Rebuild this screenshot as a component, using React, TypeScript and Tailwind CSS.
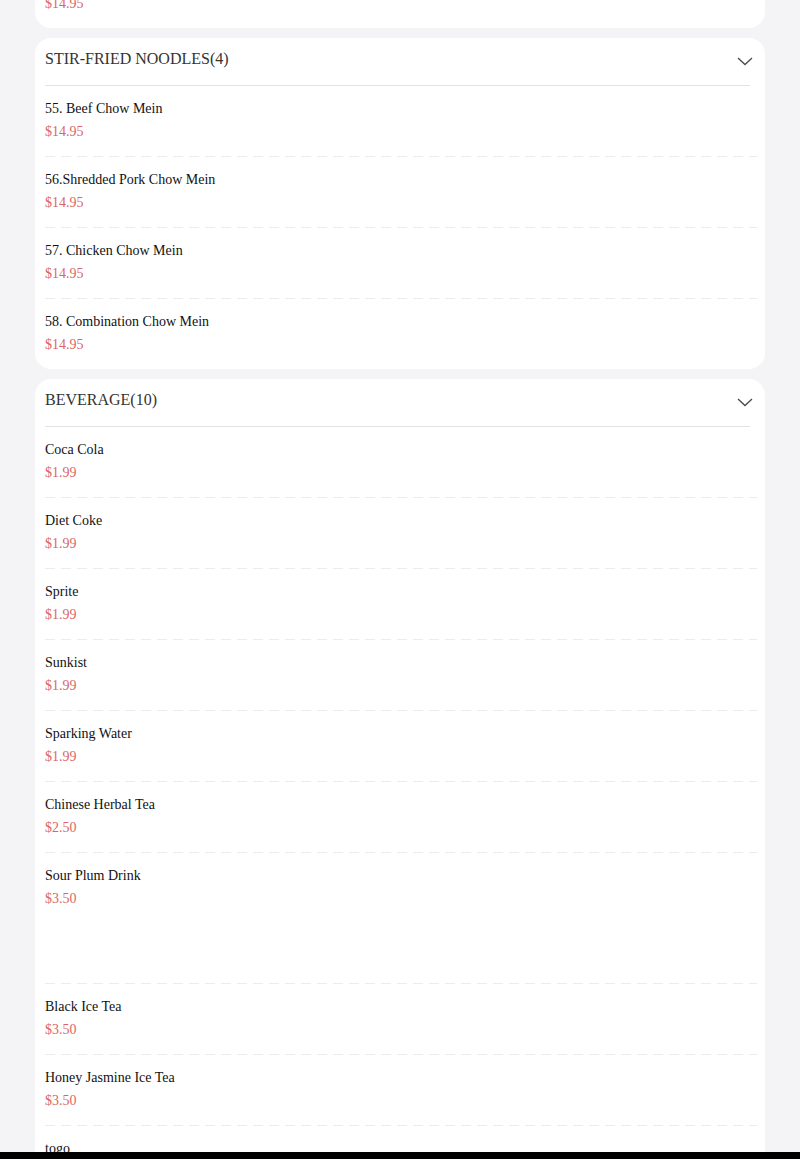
import React from "react";

interface MenuItem {
  name: string;
  price: string;
  tall?: boolean;
}

interface Section {
  title: string;
  items: MenuItem[];
}

const SECTIONS: Section[] = [
  {
    title: "STIR-FRIED NOODLES(4)",
    items: [
      { name: "55. Beef Chow Mein", price: "$14.95" },
      { name: "56.Shredded Pork Chow Mein", price: "$14.95" },
      { name: "57. Chicken Chow Mein", price: "$14.95" },
      { name: "58. Combination Chow Mein", price: "$14.95" },
    ],
  },
  {
    title: "BEVERAGE(10)",
    items: [
      { name: "Coca Cola", price: "$1.99" },
      { name: "Diet Coke", price: "$1.99" },
      { name: "Sprite", price: "$1.99" },
      { name: "Sunkist", price: "$1.99" },
      { name: "Sparking Water", price: "$1.99" },
      { name: "Chinese Herbal Tea", price: "$2.50" },
      { name: "Sour Plum Drink", price: "$3.50", tall: true },
      { name: "Black Ice Tea", price: "$3.50" },
      { name: "Honey Jasmine Ice Tea", price: "$3.50" },
      { name: "togo", price: "$0.25" },
    ],
  },
];

function Chevron() {
  return (
    <svg width="16" height="9" viewBox="0 0 16 9" className="mt-[9px] shrink-0">
      <polyline points="1,1 8,7.5 15,1" fill="none" stroke="#4a4a4a" strokeWidth="1.3" />
    </svg>
  );
}

function ItemRow({ item, last }: { item: MenuItem; last: boolean }) {
  return (
    <div className="px-[10px]">
      <div className={`pt-[13px] ${item.tall ? "pb-[74px]" : "pb-[14px]"}`}>
        <div className="text-[14px] leading-[20px] text-[#111]">{item.name}</div>
        <div className="mt-[3px] text-[14px] leading-[20px] text-[#db6664]">{item.price}</div>
      </div>
      {!last && (
        <div className="h-px mr-[-2px] bg-[repeating-linear-gradient(to_right,#ececec_0_10px,transparent_10px_16px)]" />
      )}
    </div>
  );
}

function SectionCard({ section }: { section: Section }) {
  return (
    <div className="mt-[10px] rounded-[16px] bg-white">
      <div className="flex h-[47px] items-start justify-between pl-[10px] pr-[12px] pt-[10px]">
        <span className="text-[16px] leading-[22px] text-[#333]">{section.title}</span>
        <Chevron />
      </div>
      <div className="ml-[10px] mr-[15px] h-px bg-[#e2e2e2]" />
      {section.items.map((item, i) => (
        <ItemRow key={item.name} item={item} last={i === section.items.length - 1} />
      ))}
    </div>
  );
}

export default function App() {
  return (
    <div className="min-h-screen overflow-hidden bg-[#f4f4f6] px-[35px] font-['Liberation_Serif',serif]">
      {/* tail of the previous card, scrolled past */}
      <div className="mt-[-10px] rounded-b-[16px] bg-white px-[10px] pb-[14px] pt-[4px]">
        <div className="text-[14px] leading-[20px] text-[#db6664]">$14.95</div>
      </div>
      {SECTIONS.map((s) => (
        <SectionCard key={s.title} section={s} />
      ))}
      <div className="fixed bottom-0 left-0 right-0 h-[7px] bg-black" />
    </div>
  );
}
